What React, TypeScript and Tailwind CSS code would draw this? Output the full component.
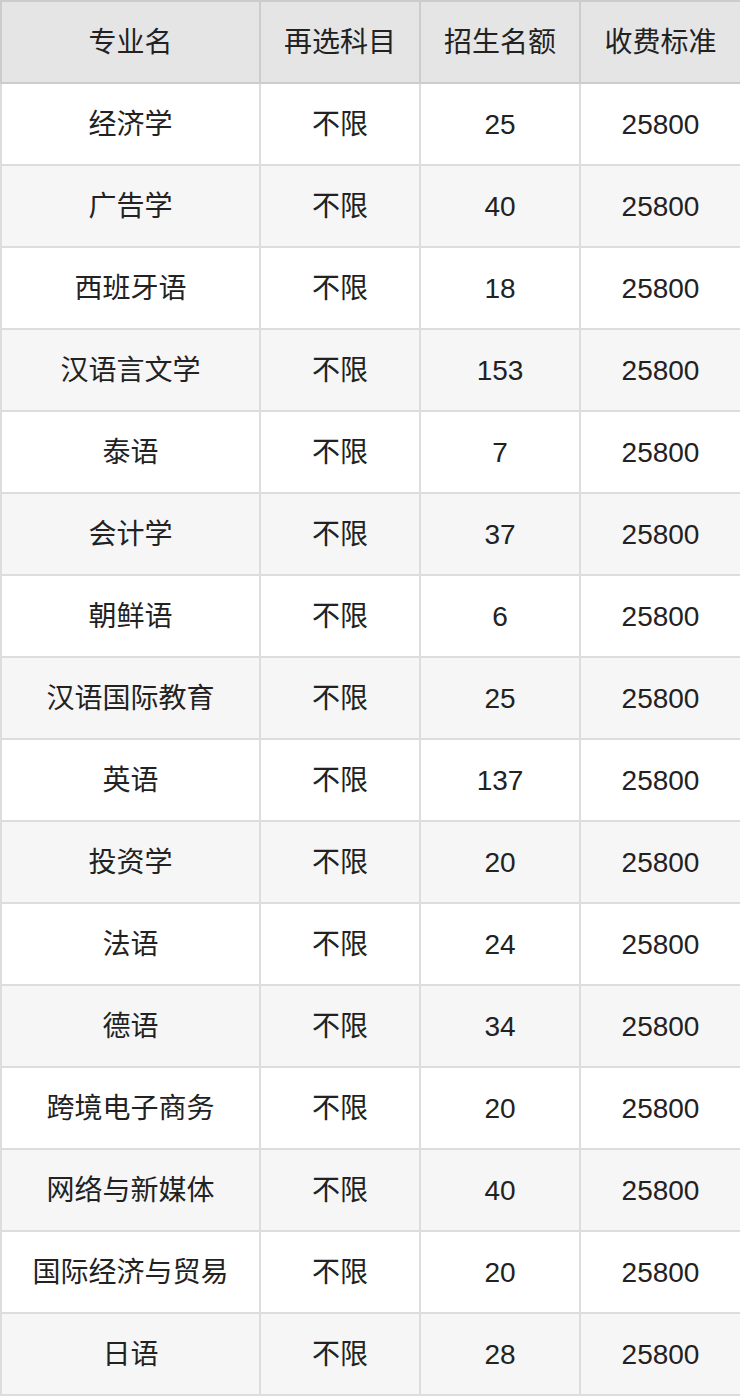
const rows: [string, string, string, string][] = [
  ["经济学", "不限", "25", "25800"],
  ["广告学", "不限", "40", "25800"],
  ["西班牙语", "不限", "18", "25800"],
  ["汉语言文学", "不限", "153", "25800"],
  ["泰语", "不限", "7", "25800"],
  ["会计学", "不限", "37", "25800"],
  ["朝鲜语", "不限", "6", "25800"],
  ["汉语国际教育", "不限", "25", "25800"],
  ["英语", "不限", "137", "25800"],
  ["投资学", "不限", "20", "25800"],
  ["法语", "不限", "24", "25800"],
  ["德语", "不限", "34", "25800"],
  ["跨境电子商务", "不限", "20", "25800"],
  ["网络与新媒体", "不限", "40", "25800"],
  ["国际经济与贸易", "不限", "20", "25800"],
  ["日语", "不限", "28", "25800"],
];

const headers = ["专业名", "再选科目", "招生名额", "收费标准"];

export default function App() {
  return (
    <div className="w-[740px] bg-white font-['Liberation_Sans','Noto_Sans_CJK_SC',sans-serif] text-[#222222]">
      <table className="w-[740px] table-fixed border-collapse text-center text-[28px]">
        <colgroup>
          <col className="w-[259px]" />
          <col className="w-[160px]" />
          <col className="w-[160px]" />
          <col className="w-[161px]" />
        </colgroup>
        <thead>
          <tr className="bg-[#e5e5e5]">
            {headers.map((h) => (
              <th key={h} className="h-[82px] border-2 border-[#cccccc] p-0 pt-[1px] font-normal">
                {h}
              </th>
            ))}
          </tr>
        </thead>
        <tbody>
          {rows.map((r, i) => (
            <tr key={i} className={i % 2 === 1 ? "bg-[#f6f6f6]" : "bg-white"}>
              {r.map((c, j) => (
                <td key={j} className="h-[82px] border-2 border-[#dddddd] p-0 pt-[1px]">
                  {c}
                </td>
              ))}
            </tr>
          ))}
        </tbody>
      </table>
    </div>
  );
}
